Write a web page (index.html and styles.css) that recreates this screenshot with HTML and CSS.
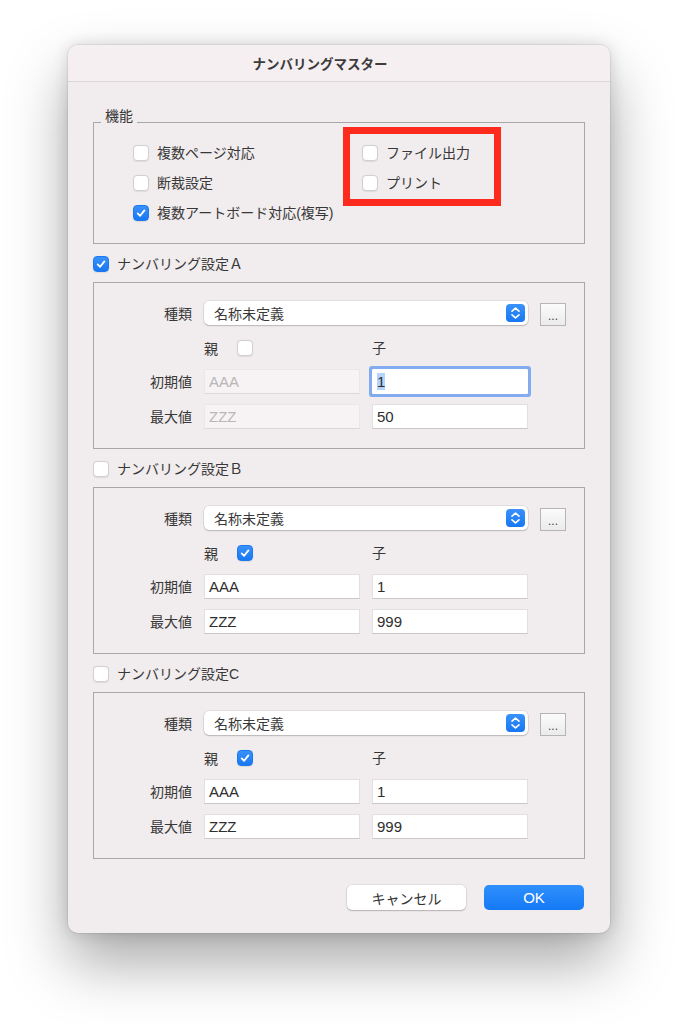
FILE: index.html
```html
<!DOCTYPE html>
<html lang="ja">
<head>
    <meta charset="UTF-8">
    <title>ナンバリングマスター</title>
    <link rel="stylesheet" href="styles.css">
</head>
<body>
    <div class="window">
        <div class="titlebar">ナンバリングマスター</div>

        <div class="content">
            <!-- 機能 -->
            <fieldset class="features">
                <legend>機能</legend>
                <div class="feature-grid">
                    <div class="check-row"><span class="check"></span>複数ページ対応</div>
                    <div class="check-row"><span class="check"></span>ファイル出力</div>
                    <div class="check-row"><span class="check"></span>断裁設定</div>
                    <div class="check-row"><span class="check"></span>プリント</div>
                    <div class="check-row"><span class="check on"><svg viewBox="0 0 16 16"><path d="M4.2 8.4 L7 11.2 L11.9 5"/></svg></span>複数アートボード対応(複写)</div>
                </div>
            </fieldset>

            <!-- 設定A -->
            <div class="check-row sec-head"><span class="check on"><svg viewBox="0 0 16 16"><path d="M4.2 8.4 L7 11.2 L11.9 5"/></svg></span>ナンバリング設定Ａ</div>
            <div class="group">
                <div class="lbl">種類</div>
                <div class="select">名称未定義<span class="stepper"><svg viewBox="0 0 19 18"><path d="M6 7.2 L9.5 4.2 L13 7.2 M6 10.8 L9.5 13.8 L13 10.8"/></svg></span></div>
                <div class="more">...</div>

                <div class="lbl"></div>
                <div class="parent">親<span class="check"></span></div>
                <div class="child">子</div>
                <div></div>

                <div class="lbl">初期値</div>
                <div class="field disabled">AAA</div>
                <div class="field focus"><span class="sel">1</span></div>
                <div></div>

                <div class="lbl">最大値</div>
                <div class="field disabled">ZZZ</div>
                <div class="field">50</div>
                <div></div>
            </div>

            <!-- 設定B -->
            <div class="check-row sec-head"><span class="check"></span>ナンバリング設定Ｂ</div>
            <div class="group">
                <div class="lbl">種類</div>
                <div class="select">名称未定義<span class="stepper"><svg viewBox="0 0 19 18"><path d="M6 7.2 L9.5 4.2 L13 7.2 M6 10.8 L9.5 13.8 L13 10.8"/></svg></span></div>
                <div class="more">...</div>

                <div class="lbl"></div>
                <div class="parent">親<span class="check on"><svg viewBox="0 0 16 16"><path d="M4.2 8.4 L7 11.2 L11.9 5"/></svg></span></div>
                <div class="child">子</div>
                <div></div>

                <div class="lbl">初期値</div>
                <div class="field">AAA</div>
                <div class="field">1</div>
                <div></div>

                <div class="lbl">最大値</div>
                <div class="field">ZZZ</div>
                <div class="field">999</div>
                <div></div>
            </div>

            <!-- 設定C -->
            <div class="check-row sec-head"><span class="check"></span>ナンバリング設定C</div>
            <div class="group">
                <div class="lbl">種類</div>
                <div class="select">名称未定義<span class="stepper"><svg viewBox="0 0 19 18"><path d="M6 7.2 L9.5 4.2 L13 7.2 M6 10.8 L9.5 13.8 L13 10.8"/></svg></span></div>
                <div class="more">...</div>

                <div class="lbl"></div>
                <div class="parent">親<span class="check on"><svg viewBox="0 0 16 16"><path d="M4.2 8.4 L7 11.2 L11.9 5"/></svg></span></div>
                <div class="child">子</div>
                <div></div>

                <div class="lbl">初期値</div>
                <div class="field">AAA</div>
                <div class="field">1</div>
                <div></div>

                <div class="lbl">最大値</div>
                <div class="field">ZZZ</div>
                <div class="field">999</div>
                <div></div>
            </div>

            <div class="buttons">
                <div class="btn btn-cancel">キャンセル</div>
                <div class="btn btn-ok">OK</div>
            </div>
        </div>

        <!-- annotation -->
        <div class="highlight"></div>
    </div>
</body>
</html>
```

FILE: styles.css
```css
* {
    box-sizing: border-box;
}

html {
    background-color: #fff;
}

body {
    margin: 0;
    padding: 45px 0 91px 68px;
    min-height: 1024px;
    font-family: "Liberation Sans", "Noto Sans CJK JP", sans-serif;
    font-size: 14px;
    color: #383838;
}

.window {
    position: relative;
    width: 542px;
    background-color: #f1eced;
    border-radius: 10px;
    box-shadow: 0 30px 60px rgba(0, 0, 0, 0.34), 0 0 16px rgba(0, 0, 0, 0.14), 0 0 0 1px rgba(0, 0, 0, 0.06);
}

.titlebar {
    height: 37px;
    border-bottom: 1px solid #dcd6d9;
    background-color: #f5eff2;
    border-radius: 10px 10px 0 0;
    display: flex;
    justify-content: center;
    align-items: center;
    font-size: 13.5px;
    font-weight: bold;
    color: #3c3c3c;
    padding: 0 38px 1px 0;
}

.content {
    padding: 0 25px 23px;
}

/* 機能 */
.features {
    margin: 27px 0 0;
    padding: 0 0 22px;
    border: 1px solid #aaa6a8;
}

.features legend {
    margin-left: 7px;
    padding: 0 4px 12px;
    line-height: 14px;
}

.feature-grid {
    display: grid;
    grid-template-columns: 229px auto;
    row-gap: 14px;
    padding: 10px 0 0 39px;
}

.check-row {
    display: flex;
    align-items: center;
    gap: 8px;
    height: 16px;
    line-height: 16px;
    white-space: nowrap;
}

.check {
    width: 16px;
    height: 16px;
    flex: none;
    border-radius: 4px;
    background-color: #fff;
    border: 1px solid #d3cfd1;
    box-shadow: 0 0.5px 1px rgba(0, 0, 0, 0.08);
    display: flex;
}

.check.on {
    background: linear-gradient(#3a91fb, #1877f2);
    border-color: #1a78f0;
}

.check svg {
    width: 14px;
    height: 14px;
    fill: none;
    stroke: #fff;
    stroke-width: 2.1;
    stroke-linecap: round;
    stroke-linejoin: round;
}

/* ナンバリング設定 */
.sec-head {
    margin-top: 12px;
}

.group {
    margin-top: 10px;
    border: 1px solid #aaa6a8;
    padding: 18px 0 19px;
    display: grid;
    grid-template-columns: 98px 156px 156px 26px;
    grid-template-rows: 24px 24px 25px 25px;
    column-gap: 12px;
    row-gap: 10px;
    align-items: center;
}

.lbl {
    text-align: right;
    line-height: 16px;
    padding-top: 1px;
}

.select {
    grid-column: 2 / 4;
    height: 24px;
    background-color: #fff;
    border-radius: 5px;
    box-shadow: 0 0 0 0.5px rgba(0, 0, 0, 0.12), 0 1px 1.5px rgba(0, 0, 0, 0.18);
    display: flex;
    align-items: center;
    justify-content: space-between;
    padding: 0 3px 0 10px;
}

.stepper {
    width: 19px;
    height: 18px;
    border-radius: 4px;
    background: linear-gradient(#3a91fb, #1877f2);
    display: flex;
}

.stepper svg {
    width: 19px;
    height: 18px;
    fill: none;
    stroke: #fff;
    stroke-width: 1.6;
    stroke-linecap: round;
    stroke-linejoin: round;
}

.more {
    width: 26px;
    height: 23px;
    margin-top: 2px;
    border: 1px solid #b6b4b5;
    background: linear-gradient(#fbfbfb, #ebebeb);
    display: flex;
    justify-content: center;
    align-items: flex-end;
    font-size: 12px;
    line-height: 12px;
    padding-bottom: 3px;
    color: #444;
}

.parent {
    display: flex;
    align-items: center;
    gap: 19px;
    padding-top: 2px;
}

.child {
    line-height: 16px;
    padding-top: 2px;
}

.field {
    height: 25px;
    background-color: #fff;
    border: 1px solid #e3dfe1;
    border-bottom-color: #cbc7c9;
    padding: 0 4px;
    line-height: 24px;
    font-size: 15px;
    color: #2e2e2e;
}

.field.disabled {
    background-color: #f7f3f5;
    border-color: #ebe7e9;
    border-bottom-color: #dcd8da;
    color: #b8b6b7;
}

.field.focus {
    border-color: #fff;
    border-radius: 1px;
    box-shadow: 0 0 0 3px #83abef;
}

.sel {
    background-color: #b4d4fd;
}

/* ボタン */
.buttons {
    display: flex;
    justify-content: flex-end;
    gap: 18px;
    margin-top: 26px;
    padding-right: 1px;
}

.btn {
    height: 25px;
    border-radius: 5px;
    display: flex;
    justify-content: center;
    align-items: center;
}

.btn-cancel {
    width: 119px;
    background-color: #fff;
    box-shadow: 0 0 0 0.5px rgba(0, 0, 0, 0.12), 0 1px 1.5px rgba(0, 0, 0, 0.2);
    color: #333;
}

.btn-ok {
    width: 100px;
    background: linear-gradient(#2f8ffc, #1579f6);
    color: #fff;
    font-size: 15px;
}

.highlight {
    position: absolute;
    left: 275px;
    top: 82px;
    width: 158px;
    height: 79px;
    border: 7px solid #ff2a1e;
}
```
